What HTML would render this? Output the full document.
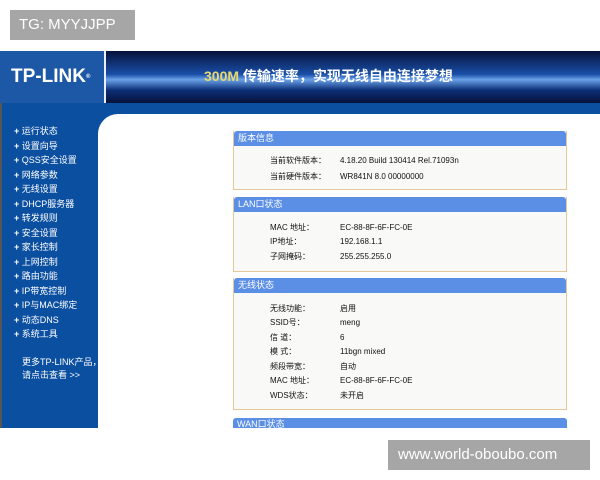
<!DOCTYPE html>
<html><head><meta charset="utf-8"><style>
*{margin:0;padding:0;box-sizing:border-box}
body{width:600px;height:480px;background:#fff;position:relative;overflow:hidden;font-family:"Liberation Sans","Noto Sans CJK SC",sans-serif}
.wm{position:absolute;background:#a6a6a6;color:#fff;font-size:15px}
#hdr{position:absolute;left:0;top:51px;width:600px;height:52px;background:linear-gradient(180deg,#06123a 0%,#1a4fa8 45%,#6aa2e8 55%,#0d2f78 75%,#06123a 100%)}
#logo{position:absolute;left:0;top:51px;width:106px;height:52px;background:#1d58a6;border-right:2px solid #e8f0ff;color:#fff;font-weight:bold;font-size:19px;line-height:52px;padding-left:11px;letter-spacing:0px}
#slogan{position:absolute;left:204px;top:66px;font-size:14px;font-weight:bold;color:#fff;letter-spacing:0px}
#slogan b{color:#e8d870}
#band{position:absolute;left:0;top:103px;width:600px;height:325px;background:#0b4fa0;border-left:2px solid #555}
#content{position:absolute;left:98px;top:114px;width:502px;height:314px;background:#fff;border-top-left-radius:20px}
#menu{position:absolute;left:14px;top:124px;color:#fff;font-size:9px;line-height:14.5px}
#menu div:before{content:"+ ";font-weight:bold}
.more{position:absolute;left:22px;top:356px;color:#fff;font-size:9px;line-height:13px}
.p{position:absolute;left:233px;width:334px;background:#f9f9f7;border:1px solid #e6c898;border-top:none}
.p .h{height:15px;background:#5b8fe6;color:#fff;font-size:9px;line-height:15px;padding-left:4px;border-radius:3px 3px 0 0}
.p table{margin:5px 0 0 36px;font-size:8px;color:#111;border-collapse:collapse}
.p td{height:14.5px;padding:0}
.p td:first-child{width:70px}
</style></head><body>
<div class="wm" style="left:10px;top:10px;width:125px;height:30px;line-height:30px;padding-left:9px">TG: MYYJJPP</div>
<div id="hdr"></div>
<div id="logo">TP-LINK<span style="font-size:6px;vertical-align:top">®</span></div>
<div id="slogan"><b>300M</b> 传输速率，实现无线自由连接梦想</div>
<div id="band"></div>
<div id="content"></div>
<div id="menu">
<div>运行状态</div><div>设置向导</div><div>QSS安全设置</div><div>网络参数</div><div>无线设置</div><div>DHCP服务器</div><div>转发规则</div><div>安全设置</div><div>家长控制</div><div>上网控制</div><div>路由功能</div><div>IP带宽控制</div><div>IP与MAC绑定</div><div>动态DNS</div><div>系统工具</div>
</div>
<div class="more">更多TP-LINK产品，<br>请点击查看 &gt;&gt;</div>
<div class="p" style="top:131px;height:59px"><div class="h">版本信息</div><table style="margin-top:6px">
<tr><td style="height:16px">当前软件版本：</td><td>4.18.20 Build 130414 Rel.71093n</td></tr>
<tr><td style="height:16px">当前硬件版本：</td><td>WR841N 8.0 00000000</td></tr></table></div>
<div class="p" style="top:197px;height:75px"><div class="h">LAN口状态</div><table style="margin-top:8px">
<tr><td>MAC 地址：</td><td>EC-88-8F-6F-FC-0E</td></tr>
<tr><td>IP地址：</td><td>192.168.1.1</td></tr>
<tr><td>子网掩码：</td><td>255.255.255.0</td></tr></table></div>
<div class="p" style="top:278px;height:132px"><div class="h">无线状态</div><table style="margin-top:8px">
<tr><td>无线功能：</td><td>启用</td></tr>
<tr><td>SSID号：</td><td>meng</td></tr>
<tr><td>信 道：</td><td>6</td></tr>
<tr><td>模 式：</td><td>11bgn mixed</td></tr>
<tr><td>频段带宽：</td><td>自动</td></tr>
<tr><td>MAC 地址：</td><td>EC-88-8F-6F-FC-0E</td></tr>
<tr><td>WDS状态：</td><td>未开启</td></tr></table></div>
<div class="p" style="top:418px;height:10px;border:none"><div class="h" style="height:10px;line-height:12px;overflow:hidden">WAN口状态</div></div>
<div class="wm" style="left:388px;top:440px;width:202px;height:30px;line-height:30px;padding-left:10px;font-size:15px">www.world-oboubo.com</div>
</body></html>
